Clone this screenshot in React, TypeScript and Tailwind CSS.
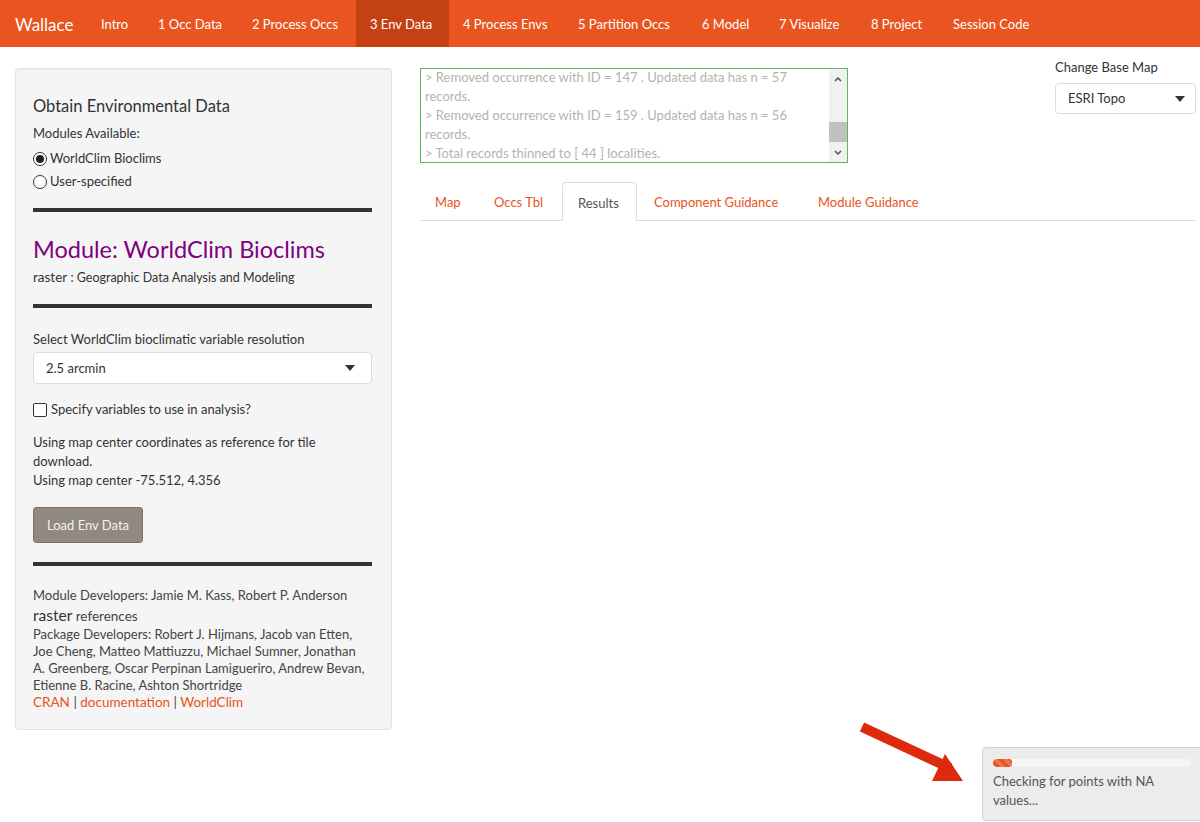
import React from "react";

const navItems = [
  { label: "Intro", w: "w-[57px]" },
  { label: "1 Occ Data", w: "w-[94px]" },
  { label: "2 Process Occs", w: "w-[118px]" },
  { label: "3 Env Data", w: "w-[93px]", active: true },
  { label: "4 Process Envs", w: "w-[115px]" },
  { label: "5 Partition Occs", w: "w-[124px]" },
  { label: "6 Model", w: "w-[77px]" },
  { label: "7 Visualize", w: "w-[92px]" },
  { label: "8 Project", w: "w-[82px]" },
  { label: "Session Code", w: "w-[110px]" },
];

const tabs = [
  { label: "Map", w: "w-[57px]" },
  { label: "Occs Tbl", w: "w-[81px]" },
  { label: "Results", w: "w-[75px]", active: true },
  { label: "Component Guidance", w: "w-[162px]" },
  { label: "Module Guidance", w: "w-[124px]" },
];

const logLines = [
  "> Removed occurrence with ID = 147 . Updated data has n = 57",
  "records.",
  "> Removed occurrence with ID = 159 . Updated data has n = 56",
  "records.",
  "> Total records thinned to [ 44 ] localities.",
];

const pkgDevs = [
  "Package Developers: Robert J. Hijmans, Jacob van Etten,",
  "Joe Cheng, Matteo Mattiuzzu, Michael Sumner, Jonathan",
  "A. Greenberg, Oscar Perpinan Lamigueriro, Andrew Bevan,",
  "Etienne B. Racine, Ashton Shortridge",
];

const Caret = () => (
  <svg width="10" height="6" viewBox="0 0 10 6" className="shrink-0">
    <path d="M0 0 L10 0 L5 6 Z" fill="#333" />
  </svg>
);

const Rule = ({ className }: { className: string }) => (
  <div className={"h-[4px] bg-[#333] " + className} />
);

const Radio = ({ checked, label }: { checked?: boolean; label: string }) => (
  <div className="flex h-[23px] items-center gap-[3px]">
    <span className="flex h-[14px] w-[14px] items-center justify-center rounded-full border border-[#333] bg-white">
      {checked && <span className="h-[8px] w-[8px] rounded-full bg-[#222]" />}
    </span>
    <span>{label}</span>
  </div>
);

function LeftPanel() {
  return (
    <div className="w-[377px] shrink-0 rounded-[4px] border border-[#e3e3e3] bg-[#f5f5f5] pt-[18px] pb-[18px] pl-[17px] pr-[19px] text-[13px] leading-[19px] text-[#333] shadow-[inset_0_1px_1px_rgba(0,0,0,0.05)]">
      <h4 className="mt-[10px] mb-[9px] text-[16.5px] leading-[18px] text-[#333]">
        Obtain Environmental Data
      </h4>
      <div className="mb-[4px]">Modules Available:</div>
      <Radio checked label="WorldClim Bioclims" />
      <Radio label="User-specified" />
      <Rule className="mt-[15px]" />
      <div className="mt-[24px] text-[23.5px] leading-[26px] text-[#800080]">
        Module: WorldClim Bioclims
      </div>
      <div className="mt-[6px]">
        <span className="text-[13.5px]">raster</span>
        <span className="text-[12.5px]"> : Geographic Data Analysis and Modeling</span>
      </div>
      <Rule className="mt-[17px]" />
      <div className="mt-[22px]">Select WorldClim bioclimatic variable resolution</div>
      <div className="mt-[3px] flex h-[32px] items-center justify-between rounded-[4px] border border-[#ddd] bg-white pl-[12px] pr-[16px]">
        <span>2.5 arcmin</span>
        <Caret />
      </div>
      <div className="mt-[16px] flex items-center gap-[4px]">
        <span className="h-[14px] w-[14px] rounded-[2px] border border-[#333] bg-white" />
        <span>Specify variables to use in analysis?</span>
      </div>
      <div className="mt-[14px]">
        Using map center coordinates as reference for tile download.
        <br />
        Using map center -75.512, 4.356
      </div>
      <button className="mt-[17px] block h-[36px] w-[110px] rounded-[4px] border border-dotted border-[#5f5850] bg-[#918980] text-[13px] text-[#f2f2f2]">
        Load Env Data
      </button>
      <Rule className="mt-[19px]" />
      <div className="mt-[21px] whitespace-nowrap text-[13px] leading-[17px] text-[#444]">
        <div>Module Developers: Jamie M. Kass, Robert P. Anderson</div>
        <div className="mt-[2px] leading-[19px]">
          <span className="text-[15.5px] text-[#333]">raster</span>
          <span className="text-[13.5px] text-[#444]"> references</span>
        </div>
        {pkgDevs.map((l) => (
          <div key={l}>{l}</div>
        ))}
        <div className="text-[13.5px]">
          <span className="text-[#e95420]">CRAN</span> |{" "}
          <span className="text-[#e95420]">documentation</span> |{" "}
          <span className="text-[#e95420]">WorldClim</span>
        </div>
      </div>
    </div>
  );
}

function LogBox() {
  return (
    <div className="flex h-[95px] w-[428px] overflow-hidden border border-[#5cb85c] bg-white">
      <div className="flex-1 overflow-hidden pl-[4px] text-[13px] leading-[19px] text-[#b3b3b3]">
        <div className="-mt-[1px]">
          {logLines.map((l, i) => (
            <div key={i} className="whitespace-nowrap">
              {l}
            </div>
          ))}
        </div>
      </div>
      <div className="flex w-[18px] flex-col items-center bg-[#f1f1f1]">
        <svg width="10" height="16" viewBox="0 0 10 16" className="mt-[2px]">
          <path d="M2 10 L5 7 L8 10" stroke="#505050" strokeWidth="1.5" fill="none" />
        </svg>
        <div className="mt-[35px] h-[20px] w-[18px] bg-[#c1c1c1]" />
        <div className="flex-1" />
        <svg width="10" height="16" viewBox="0 0 10 16" className="mb-[1px]">
          <path d="M2 6 L5 9 L8 6" stroke="#505050" strokeWidth="1.5" fill="none" />
        </svg>
      </div>
    </div>
  );
}

export default function App() {
  return (
    <div className="relative h-[822px] overflow-hidden bg-white font-['Lato','Liberation_Sans',sans-serif] text-[#333]">
      <nav className="flex h-[47px] items-stretch bg-[#e95420] text-[13px] text-white">
        <div className="flex w-[87px] items-center pl-[15px] pt-[2px] text-[17px]">Wallace</div>
        {navItems.map((n) => (
          <div
            key={n.label}
            className={
              "flex items-center whitespace-nowrap pl-[14px] pt-[2px] " +
              n.w +
              (n.active ? " bg-[#c34113]" : "")
            }
          >
            {n.label}
          </div>
        ))}
      </nav>

      <div className="flex pl-[15px] pr-[4px] pt-[21px]">
        <LeftPanel />
        <div className="ml-[28px] flex-1">
          <div className="flex items-start justify-between">
            <LogBox />
            <div className="-mt-[10px] w-[141px] text-[13px]">
              <div className="leading-[19px]">Change Base Map</div>
              <div className="mt-[6px] flex h-[31px] items-center justify-between rounded-[4px] border border-[#ddd] bg-white pl-[12px] pr-[10px]">
                <span>ESRI Topo</span>
                <Caret />
              </div>
            </div>
          </div>
          <div className="mt-[19px] flex h-[39px] items-stretch border-b border-[#ddd] text-[13px]">
            {tabs.map((t) => (
              <div
                key={t.label}
                className={
                  "mr-[2px] flex items-center whitespace-nowrap pl-[15px] pt-[3px] " +
                  t.w +
                  (t.active
                    ? " -mb-[1px] rounded-t-[4px] border border-b-0 border-[#ddd] bg-white pl-[14px] text-[#555]"
                    : " text-[#e95420]")
                }
              >
                {t.label}
              </div>
            ))}
          </div>
        </div>
      </div>

      <svg
        className="absolute left-[855px] top-[720px]"
        width="115"
        height="70"
        viewBox="0 0 115 70"
      >
        <path d="M7 7 L95 48" stroke="#dd2a0c" strokeWidth="10" fill="none" />
        <path d="M90 34 L77 61 L108 61 Z" fill="#dd2a0c" />
      </svg>

      <div className="absolute left-[982px] top-[747px] h-[74px] w-[230px] rounded-[4px] border border-[#d0d0d0] bg-[#ececec] px-[10px] pt-[11px] text-[13px] leading-[19px] text-[#555]">
        <div className="h-[8px] w-[198px] overflow-hidden rounded-[4px] bg-[#f5f5f5]">
          <div className="h-[8px] w-[19px] rounded-[3px] bg-[#e95420] bg-[linear-gradient(45deg,rgba(255,255,255,0.2)_25%,transparent_25%,transparent_50%,rgba(255,255,255,0.2)_50%,rgba(255,255,255,0.2)_75%,transparent_75%)] bg-[length:10px_10px]" />
        </div>
        <div className="mt-[5px] w-[190px]">Checking for points with NA values...</div>
      </div>
    </div>
  );
}
